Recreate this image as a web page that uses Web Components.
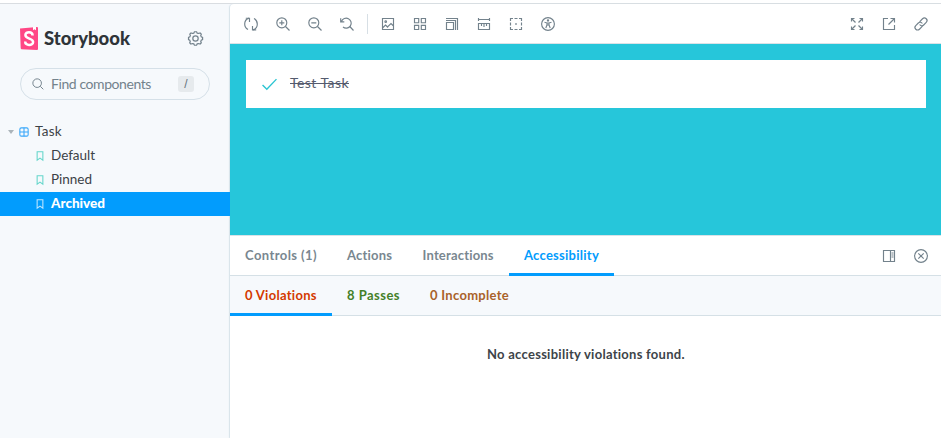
<!DOCTYPE html>
<html lang="en"><head><meta charset="utf-8"><title>Storybook</title>
<style>
html,body{margin:0;height:100%;overflow:hidden}
body{font:13px/20px Lato,"Open Sans",sans-serif;color:#333;background:#fff}
</style></head><body><story-app></story-app>
<script>
const icons={
sync:'<path d="M5 1.100C2.500 1.800.700 4.100.700 7c0 2.400 1.200 4.400 3.300 5.500M9 12.900c2.500-.700 4.300-3 4.300-5.900 0-2.400-1.200-4.400-3.300-5.500"/><path d="M1.800 1.200h3.700V5M12.200 12.800H8.500V9"/>',
zoomin:'<circle cx="5.8" cy="5.800" r="5"/><path d="M9.500 9.500l4 4M3.300 5.800h5M5.800 3.300v5"/>',
zoomout:'<circle cx="5.8" cy="5.800" r="5"/><path d="M9.500 9.500l4 4M3.300 5.800h5"/>',
reset:'<path d="M1.500 4.500A5 5 0 1 1 3 10M9.800 9.500l3.700 4M.700 1.300v3.500h3.600"/>',
photo:'<path d="M1.500 1.500h11v11h-11zM1.500 11l3-3 2 2L10 6.500l2.500 2.500M5.500 9l1.500 1.500"/><circle cx="4.700" cy="4.700" r=".8"/>',
grid:'<path d="M1.500 1.500h4.200v4.200H1.500zM8.300 1.500h4.200v4.200H8.300zM1.500 8.300h4.200v4.200H1.500zM8.300 8.300h4.200v4.200H8.300z"/>',
grow:'<path d="M1.500 5.500h7v7h-7zM1 3.500h9.500V13M1 1.500h11.500V13"/>',
ruler:'<path d="M1.500 1v3M12.500 1v3M1.500 2.500h11M1.500 6.500h11v6h-11zM4.500 7v2M7 7v3M9.500 7v2"/>',
outline:'<path d="M1.500 4V1.500H4M10 1.500h2.500V4M12.500 10v2.500H10M4 12.500H1.500V10M5.500 1.500h3M5.500 12.500h3M1.500 5.500v3M12.500 5.500v3"/><path d="M6.200 7h1.600" stroke-width="1.500"/>',
access:'<circle cx="7" cy="7" r="6.400"/><circle cx="7" cy="3.400" r=".6"/><path d="M3.500 5.300L6 6h2l2.500-.700M6 6v2l-1.200 3M8 6v2l1.200 3M6 8h2"/>',
expand:'<path d="M1.500 4.500v-3h3M9.500 1.500h3v3M12.500 9.500v3h-3M4.500 12.500h-3v-3M1.500 1.500l4 4M12.500 1.500l-4 4M12.500 12.500l-4-4M1.500 12.500l4-4"/>',
share:'<path d="M6 1.500H1.500v11h11V8M8.500 1.500h4v4M12.500 1.500L6.500 7.500"/>',
link:'<g transform="rotate(-45 7 7)"><path d="M6.500 9.600H2.200a2.600 2.600 0 0 1 0-5.200h3.600a2.600 2.600 0 0 1 2.500 3.200M7.500 4.400h4.300a2.600 2.600 0 0 1 0 5.200H8.200a2.600 2.600 0 0 1-2.500-3.200"/></g>',
right:'<path d="M1.500 1.500h11v11h-11zM8.500 1.500v11M9.500 4h2M9.500 6h2M9.500 8h2"/>',
close:'<circle cx="7" cy="7" r="6.400"/><path d="M4.300 4.300l5.400 5.400M9.700 4.300L4.300 9.700"/>',
search:'<circle cx="6" cy="6" r="5"/><path d="M9.700 9.700l3.500 3.500"/>',
gear:'<path d="M6 .7h2l.600 1.300 1.300.300 1.400-.500 1.100 1.200-.500 1.300.500 1.200 1.200.500v2l-1.200.500-.500 1.200.500 1.300-1.100 1.200-1.400-.500-1.300.300L8 13.300H6L5.400 12l-1.300-.300-1.400.500L1.600 11l.500-1.300-.500-1.200L.500 8V6l1.200-.500.500-1.200L1.700 3l1.100-1.200 1.400.500L5.400 2z"/><circle cx="7" cy="7" r="2.500"/>',
component:'<rect x="1.200" y="1.200" width="11.600" height="11.600" rx="2"/><path d="M7 1v12M1 7h12"/>',
bookmark:'<path d="M3 1h8v12L7 10l-4 3z"/>',
check:'<path d="M.5 7.500l4 4L13.500 2"/>'
};
class UiIcon extends HTMLElement{connectedCallback(){
const s=this.getAttribute('size')||14,w=this.getAttribute('weight')||1.15;
this.attachShadow({mode:'open'}).innerHTML=`<style>:host{display:block;flex:none;width:${s}px;height:${s}px}svg{display:block;width:100%;height:100%;overflow:visible}</style><svg viewBox="0 0 14 14" fill="none" stroke="currentColor" stroke-width="${w}">${icons[this.getAttribute('name')]}</svg>`;}}
customElements.define('ui-icon',UiIcon);

/* A text run tracked so that it fills the given width. */
class UiText extends HTMLElement{connectedCallback(){
this.attachShadow({mode:'open'}).innerHTML='<style>:host{display:block;flex:none;white-space:nowrap}:host([done]) span{text-decoration:line-through}span{display:inline-block}</style><span><slot></slot></span>';
const w=+this.getAttribute('width'),span=this.shadowRoot.querySelector('span');
this.style.width=w+'px';
span.style.letterSpacing=(w-span.getBoundingClientRect().width)/this.textContent.length+'px';}}
customElements.define('ui-text',UiText);

class TreeRow extends HTMLElement{connectedCallback(){
this.attachShadow({mode:'open'}).innerHTML=`<style>:host{display:flex;align-items:center;height:24px;padding-left:35px;box-sizing:border-box;color:#3c4247}:host([root]){padding-left:8px}ui-icon{margin-right:6px;color:#66d6cb}:host([root]) ui-icon{color:#3aa8fa;margin:0 6px 0 5px}:host([selected]){position:relative;background:#029cfd;color:#fff;font-weight:900}:host([selected]) ui-icon{color:#bde5ff}i{display:none}:host([root]) i{display:block;border:3.500px solid transparent;border-top:4px solid #abb4ba;border-bottom:0}slot{display:block;margin-top:-2px}</style><i></i><ui-icon size="10" weight="1.500" name="${this.hasAttribute('root')?'component':'bookmark'}"></ui-icon><slot></slot>`;}}
customElements.define('tree-row',TreeRow);

class SideBar extends HTMLElement{connectedCallback(){
this.attachShadow({mode:'open'}).innerHTML=`<style>
:host{display:block;width:230px;flex:none;background:#f6f9fc}
.brand{display:flex;align-items:center;padding:22px 27px 0 20px;height:25px}
.logo{width:18px;height:23px;flex:none;margin-right:6px}
.brand ui-text{font:900 18.500px/24px Lato,sans-serif;color:#2e3438;padding-bottom:2px}
.brand ui-icon{margin-left:auto;color:#73828c}
.search{display:flex;align-items:center;box-sizing:border-box;width:190px;height:32px;margin:17px 0 20px 20px;padding:0 15px 0 11px;border:1px solid #d5e0e8;border-radius:16px;color:#73828c;font-size:14px}
.search ui-text{padding-bottom:1px}
.search ui-icon{margin-right:7px}
kbd{margin-left:auto;width:16px;height:16px;border-radius:3px;background:#e6eaed;color:#65727b;font:12px/16px "Liberation Sans",sans-serif;text-align:center}
tree-row{font-size:13.500px}
</style><div class="brand"><svg class="logo" viewBox="0 0 18 23"><path d="M0 1.400L17 0Q18 0 18 1v21q0 1-1 1L1.500 22.200Q.700 22 .700 21z" fill="#ff4785"/><path d="M13 0h3v3.200L14.500 2.200 13 3.200z" fill="#fff"/><path d="M12.600 8.500C12.600 3.900 5.400 4.300 5.400 8c0 4.300 7.700 3 7.700 7 0 4.200-8.200 4-7.900-.500" fill="none" stroke="#fff" stroke-width="2.500"/></svg><ui-text width="86">Storybook</ui-text><ui-icon name="gear" size="15"></ui-icon></div>
<div class="search"><ui-icon name="search" size="12"></ui-icon><ui-text width="100">Find components</ui-text><kbd>/</kbd></div>
<tree-row root><ui-text width="27">Task</ui-text></tree-row><tree-row><ui-text width="44">Default</ui-text></tree-row><tree-row><ui-text width="41">Pinned</ui-text></tree-row><tree-row selected><ui-text width="54">Archived</ui-text></tree-row>`;}}
customElements.define('side-bar',SideBar);

class ToolBar extends HTMLElement{connectedCallback(){
const group=a=>this.getAttribute(a).split(' ').map(n=>n==='|'?'<hr>':`<ui-icon name="${n}"></ui-icon>`).join('');
this.attachShadow({mode:'open'}).innerHTML=`<style>:host{display:flex;justify-content:space-between;height:39px;padding:0 13px 0 14px;color:#73828c;border-bottom:1px solid #dbe2e7}div{display:flex;align-items:center;gap:18px;padding-top:1px}hr{width:1px;height:20px;border:0;margin:0 -5px;background:#d7dfe5}</style><div>${group('left')}</div><div>${group('right')}</div>`;}}
customElements.define('tool-bar',ToolBar);

class TaskPreview extends HTMLElement{connectedCallback(){
this.attachShadow({mode:'open'}).innerHTML=`<style>:host{display:block;box-sizing:border-box;height:191px;padding:16px 15px 0 16px;background:#26c6da}div{height:48px;display:flex;align-items:center;background:#fff;color:#555b6e;padding-left:16px;font:14px/20px Lato,sans-serif}ui-icon{color:#2cc5d2;margin-right:13px}ui-text{padding-bottom:2px}</style><div><ui-icon name="check" size="15" weight="1.300"></ui-icon><ui-text done width="59">Test Task</ui-text></div>`;}}
customElements.define('task-preview',TaskPreview);

class TabItem extends HTMLElement{connectedCallback(){
this.attachShadow({mode:'open'}).innerHTML=`<style>:host{display:block;box-sizing:border-box;height:40px;padding:9px 15px 0;border-bottom:3px solid transparent;margin-bottom:-1px}:host([active]){border-color:#029cfd}</style><slot></slot>`;}}
customElements.define('tab-item',TabItem);

class TabBar extends HTMLElement{connectedCallback(){
this.attachShadow({mode:'open'}).innerHTML=`<style>:host{display:flex;box-sizing:border-box;height:40px;border-bottom:1px solid #d5e0e6;font-weight:700;color:#798790}:host([tint]){background:#f6f9fc}div{display:flex;gap:18px;align-items:center;margin-left:auto;padding:1px 13px 0 0;color:#73828c}</style><slot></slot><div><slot name="actions"></slot></div>`;}}
customElements.define('tab-bar',TabBar);

class StoryApp extends HTMLElement{connectedCallback(){
this.attachShadow({mode:'open'}).innerHTML=`<style>
:host{display:flex;box-sizing:border-box;height:100vh;margin:0;padding-top:4px;background:linear-gradient(#fff 3px,#d9dde1 3px,#d9dde1 4px,#f6f9fc 4px)}
main{flex:1;min-width:0;background:#fff;border-radius:4px 0 0 0;box-shadow:-1px 0 1px #d8e3e9}
.line{height:1px;background:#d9e2e7}
p{display:flex;justify-content:center;margin:28px 0 0 1px;font-weight:700;color:#3d4449}
</style><side-bar></side-bar><main><tool-bar left="sync zoomin zoomout reset | photo grid grow ruler outline access" right="expand share link"></tool-bar><task-preview></task-preview><div class="line"></div>
<tab-bar><tab-item><ui-text width="72">Controls (1)</ui-text></tab-item><tab-item><ui-text width="45.500">Actions</ui-text></tab-item><tab-item><ui-text width="71.500">Interactions</ui-text></tab-item><tab-item active style="color:#029cfd"><ui-text width="75">Accessibility</ui-text></tab-item><ui-icon slot="actions" name="right"></ui-icon><ui-icon slot="actions" name="close"></ui-icon></tab-bar>
<tab-bar tint><tab-item active style="color:#d43900"><ui-text width="72">0 Violations</ui-text></tab-item><tab-item style="color:#448028"><ui-text width="53">8 Passes</ui-text></tab-item><tab-item style="color:#a9622a"><ui-text width="79">0 Incomplete</ui-text></tab-item></tab-bar>
<p><ui-text width="198">No accessibility violations found.</ui-text></p></main>`;}}
customElements.define('story-app',StoryApp);
</script></body></html>
